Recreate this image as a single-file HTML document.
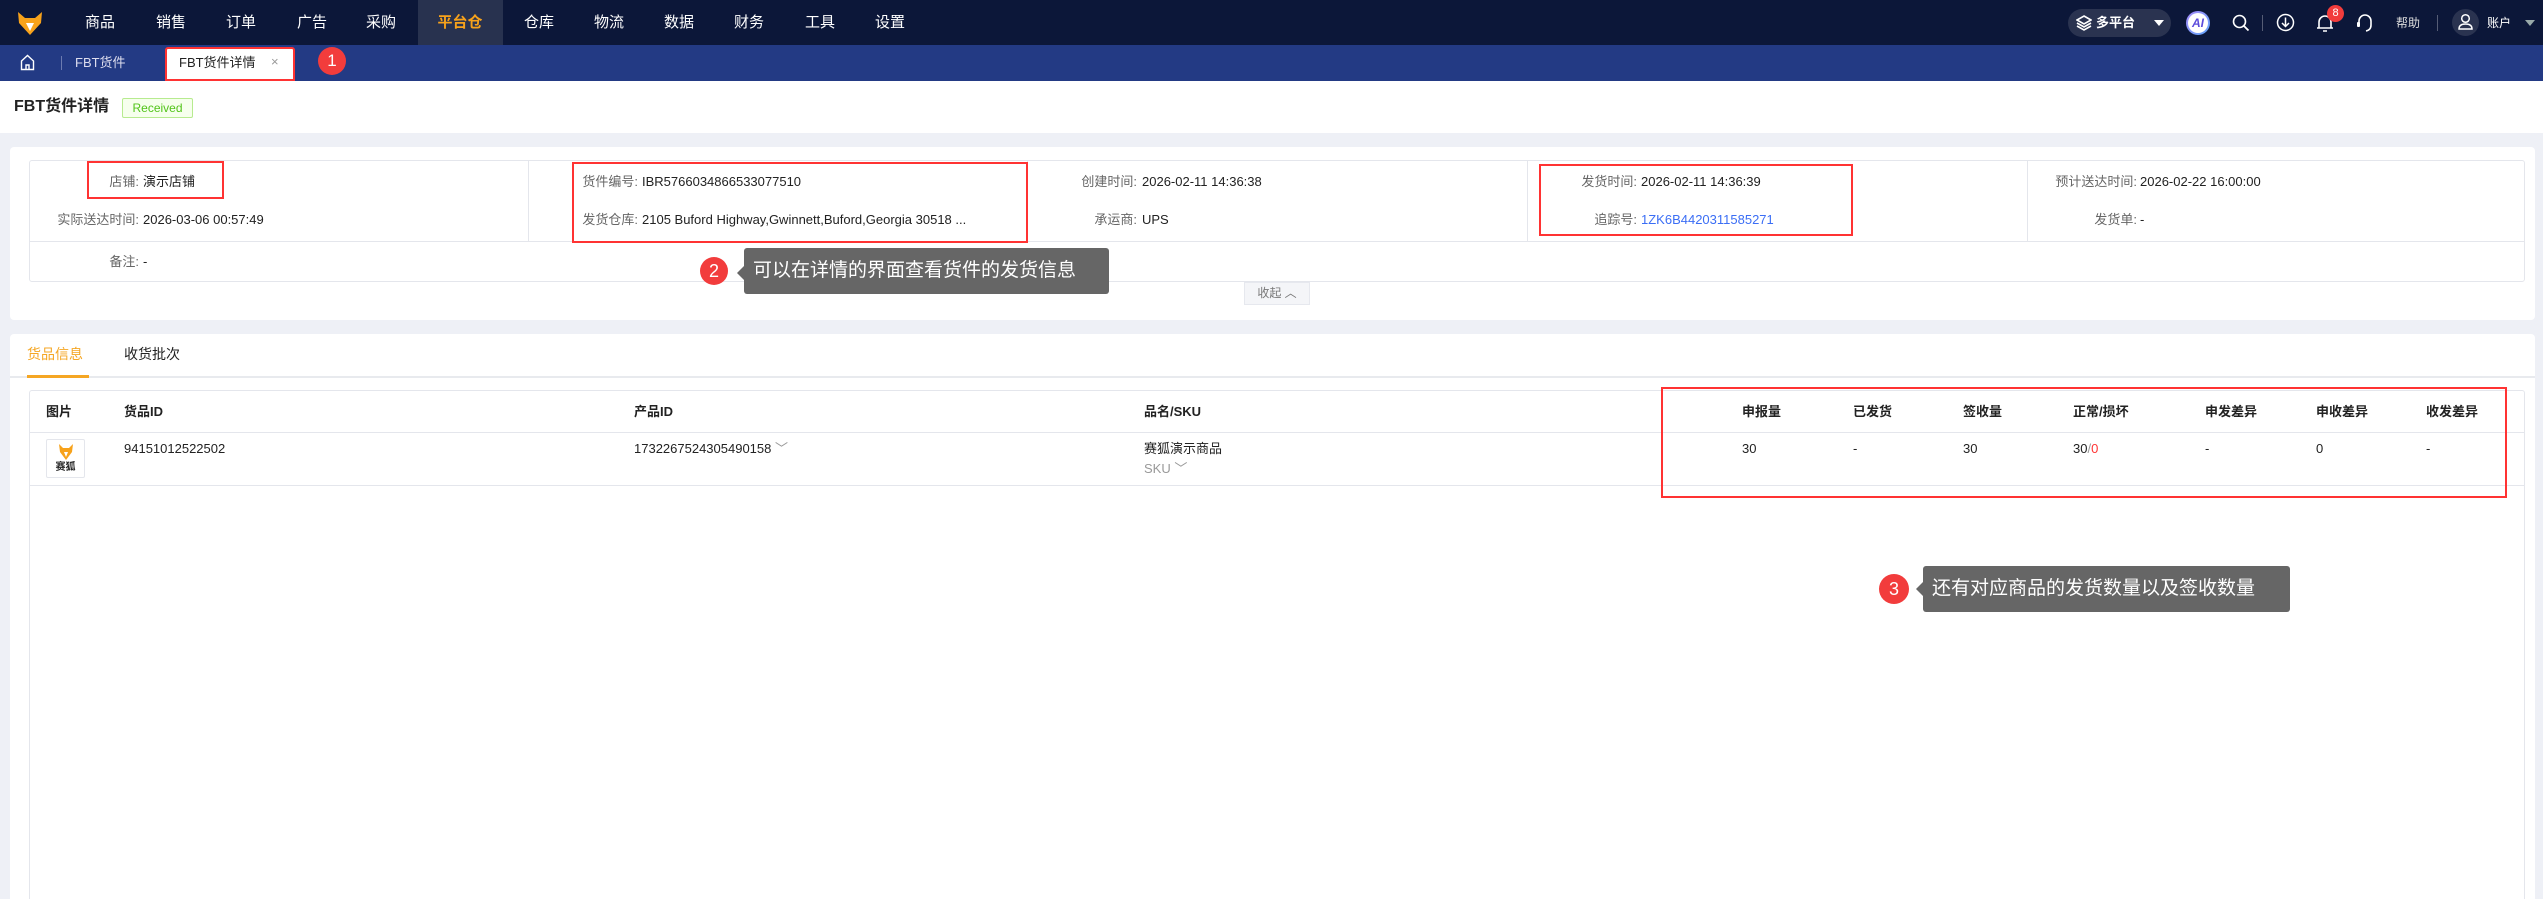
<!DOCTYPE html>
<html style="width:2543px;height:899px;overflow:hidden"><head><meta charset="utf-8"><style>
*{margin:0;padding:0;box-sizing:border-box}
body{width:2543px;height:899px;overflow:hidden;background:#eef0f6;font-family:"Liberation Sans","Noto Sans CJK SC",sans-serif;font-size:13px;line-height:16px;color:#222;position:relative}
.a{position:absolute;white-space:nowrap}
.nav{position:absolute;left:0;top:0;width:2543px;height:45px;background:#0c1739}
.nav .it{position:absolute;top:0;height:45px;line-height:45px;color:#fff;font-size:15px;transform:translateX(-50%)}
.tabs{position:absolute;left:0;top:45px;width:2543px;height:36px;background:#233a84}
.hdr{position:absolute;left:0;top:81px;width:2543px;height:52px;background:#fff}
.card{position:absolute;background:#fff;border-radius:4px}
.red{position:absolute;border:2px solid #f33}
.lbl{position:absolute;color:#666;text-align:right;width:106px;line-height:16px}
.val{position:absolute;color:#222;line-height:16px;white-space:nowrap}
.badge{position:absolute;border-radius:50%;background:#f23c3c;color:#fff;text-align:center}
.tip{position:absolute;background:#666;color:#fff;border-radius:3px}
.th{position:absolute;top:404px;font-weight:bold;font-size:13px}
.td{position:absolute;top:441px;white-space:nowrap}
</style></head><body>
<div class="nav">
 <svg class="a" style="left:17px;top:11px" width="26" height="25" viewBox="0 0 26 25"><path d="M1 1 L8 7 L18 7 L25 1 L24 12 L13 24 L2 12 Z" fill="#f7a21b"/><path d="M9 12 L13 20 L17 12 Z" fill="#fff"/></svg>
 <div class="it" style="left:100px">商品</div><div class="it" style="left:171px">销售</div><div class="it" style="left:241px">订单</div><div class="it" style="left:312px">广告</div><div class="it" style="left:381px">采购</div>
 <div class="a" style="left:418px;top:0;width:85px;height:45px;background:#28324f"></div>
 <div class="it" style="left:460px;color:#f7a21b;font-weight:bold">平台仓</div>
 <div class="it" style="left:539px">仓库</div><div class="it" style="left:609px">物流</div><div class="it" style="left:679px">数据</div><div class="it" style="left:749px">财务</div><div class="it" style="left:820px">工具</div><div class="it" style="left:890px">设置</div>
 <div class="a" style="left:2068px;top:9px;width:103px;height:28px;border-radius:14px;background:#2a3350"></div>
 <svg class="a" style="left:2076px;top:15px" width="16" height="16" viewBox="0 0 16 16"><path d="M8 1 L15 5 L8 9 L1 5 Z M1 8 L8 12 L15 8 M1 11 L8 15 L15 11" fill="none" stroke="#fff" stroke-width="1.6"/></svg>
 <div class="a" style="left:2096px;top:15px;color:#fff;font-size:13px;font-weight:bold">多平台</div>
 <div class="a" style="left:2154px;top:20px;border:5px solid transparent;border-top:6px solid #fff"></div>
 <div class="a" style="left:2186px;top:11px;width:24px;height:24px;border-radius:50%;background:linear-gradient(135deg,#a78bfa,#60a5fa);"></div>
 <div class="a" style="left:2188px;top:13px;width:20px;height:20px;border-radius:50%;background:#fff;color:#5b4bdb;font-weight:bold;font-style:italic;font-size:12px;text-align:center;line-height:20px">AI</div>
 <svg class="a" style="left:2232px;top:14px" width="18" height="18" viewBox="0 0 18 18"><circle cx="7.5" cy="7.5" r="6" fill="none" stroke="#fff" stroke-width="1.6"/><path d="M12 12 L16.5 16.5" stroke="#fff" stroke-width="1.8"/></svg>
 <div class="a" style="left:2262px;top:15px;width:1px;height:16px;background:#555c75"></div>
 <svg class="a" style="left:2276px;top:13px" width="19" height="19" viewBox="0 0 19 19"><circle cx="9.5" cy="9.5" r="8" fill="none" stroke="#fff" stroke-width="1.5"/><path d="M9.5 4.5 V13 M6 10 L9.5 13.5 L13 10" fill="none" stroke="#fff" stroke-width="1.5"/></svg>
 <svg class="a" style="left:2316px;top:13px" width="18" height="20" viewBox="0 0 18 20"><path d="M3 15 V9 a6 6 0 0 1 12 0 V15 Z M1 15 H17 M7 18 H11" fill="none" stroke="#fff" stroke-width="1.6"/></svg>
 <div class="badge" style="left:2327px;top:5px;width:17px;height:17px;font-size:11px;line-height:17px">8</div>
 <svg class="a" style="left:2356px;top:13px" width="18" height="20" viewBox="0 0 18 20"><path d="M3 12 V8 a6 6 0 0 1 12 0 V12 M15 12 Q15 17 10 18" fill="none" stroke="#fff" stroke-width="1.6"/><rect x="1" y="9" width="3" height="5" rx="1" fill="#fff"/></svg>
 <div class="a" style="left:2396px;top:15px;color:#ddd;font-size:12px">帮助</div>
 <div class="a" style="left:2437px;top:15px;width:1px;height:16px;background:#555c75"></div>
 <div class="a" style="left:2452px;top:9px;width:27px;height:27px;border-radius:50%;background:#2a3350"></div>
 <svg class="a" style="left:2457px;top:13px" width="17" height="18" viewBox="0 0 17 18"><circle cx="8.5" cy="5.5" r="3.8" fill="none" stroke="#fff" stroke-width="1.5"/><path d="M2 16 Q2 11 8.5 11 Q15 11 15 16 Z" fill="none" stroke="#fff" stroke-width="1.5"/></svg>
 <div class="a" style="left:2487px;top:15px;color:#fff;font-size:12px">账户</div>
 <div class="a" style="left:2525px;top:20px;border:5px solid transparent;border-top:6px solid #9aa"></div>
</div>
<div class="tabs">
 <svg class="a" style="left:20px;top:9px" width="15" height="17" viewBox="0 0 15 17"><path d="M1.5 7 L7.5 1.5 L13.5 7 V15.5 H1.5 Z M6 15.5 V11 H9 V15.5" fill="none" stroke="#fff" stroke-width="1.4"/></svg>
 <div class="a" style="left:61px;top:11px;width:1px;height:14px;background:#6c7bb0"></div>
 <div class="a" style="left:75px;top:10px;color:#dde;font-size:13px">FBT货件</div>
 <div class="a" style="left:165px;top:2px;width:130px;height:34px;background:#fff;border:2px solid #f33;border-radius:3px 3px 0 0"></div>
 <div class="a" style="left:179px;top:10px;color:#222;font-size:13px">FBT货件详情</div>
 <div class="a" style="left:271px;top:9px;color:#999;font-size:13px">×</div>
 <div class="badge" style="left:318px;top:2px;width:28px;height:28px;font-size:17px;line-height:28px">1</div>
</div>
<div class="hdr">
 <div class="a" style="left:14px;top:18px;font-size:16px;font-weight:bold">FBT货件详情</div>
 <div class="a" style="left:122px;top:17px;width:71px;height:20px;border:1px solid #b7eb8f;background:#f6ffed;color:#52c41a;font-size:12px;text-align:center;line-height:18px;border-radius:2px">Received</div>
</div>
<div class="card" style="left:10px;top:147px;width:2525px;height:173px"></div>
<div class="a" style="left:29px;top:160px;width:2496px;height:122px;border:1px solid #e4e6ec;border-radius:3px"></div>
<div class="a" style="left:29px;top:241px;width:2496px;height:1px;background:#e4e6ec"></div>
<div class="a" style="left:528px;top:160px;width:1px;height:81px;background:#e4e6ec"></div>
<div class="a" style="left:1027px;top:160px;width:1px;height:81px;background:#e4e6ec"></div>
<div class="a" style="left:1527px;top:160px;width:1px;height:81px;background:#e4e6ec"></div>
<div class="a" style="left:2027px;top:160px;width:1px;height:81px;background:#e4e6ec"></div>
<div class="lbl" style="left:33px;top:174px">店铺:</div><div class="val" style="left:143px;top:174px">演示店铺</div>
<div class="lbl" style="left:33px;top:212px">实际送达时间:</div><div class="val" style="left:143px;top:212px">2026-03-06 00:57:49</div>
<div class="lbl" style="left:33px;top:254px">备注:</div><div class="val" style="left:143px;top:254px">-</div>
<div class="lbl" style="left:532px;top:174px">货件编号:</div><div class="val" style="left:642px;top:174px">IBR5766034866533077510</div>
<div class="lbl" style="left:532px;top:212px">发货仓库:</div><div class="val" style="left:642px;top:212px">2105 Buford Highway,Gwinnett,Buford,Georgia 30518 ...</div>
<div class="lbl" style="left:1031px;top:174px">创建时间:</div><div class="val" style="left:1142px;top:174px">2026-02-11 14:36:38</div>
<div class="lbl" style="left:1031px;top:212px">承运商:</div><div class="val" style="left:1142px;top:212px">UPS</div>
<div class="lbl" style="left:1531px;top:174px">发货时间:</div><div class="val" style="left:1641px;top:174px">2026-02-11 14:36:39</div>
<div class="lbl" style="left:1531px;top:212px">追踪号:</div><div class="val" style="left:1641px;top:212px;color:#3b6ef5">1ZK6B4420311585271</div>
<div class="lbl" style="left:2031px;top:174px">预计送达时间:</div><div class="val" style="left:2140px;top:174px">2026-02-22 16:00:00</div>
<div class="lbl" style="left:2031px;top:212px">发货单:</div><div class="val" style="left:2140px;top:212px">-</div>
<div class="red" style="left:87px;top:161px;width:137px;height:38px"></div>
<div class="red" style="left:572px;top:162px;width:456px;height:81px"></div>
<div class="red" style="left:1539px;top:164px;width:314px;height:72px"></div>
<div class="a" style="left:1244px;top:282px;width:66px;height:23px;background:#f4f5f8;border:1px solid #e6e8ee;color:#777;font-size:12px;text-align:center;line-height:21px">收起 ︿</div>
<div class="badge" style="left:700px;top:257px;width:28px;height:28px;font-size:18px;line-height:28px">2</div>
<div class="a" style="left:737px;top:266px;border:7px solid transparent;border-right:7px solid #666;border-left:0"></div>
<div class="tip" style="left:744px;top:248px;width:365px;height:46px;font-size:19px;line-height:46px;padding-left:9px">可以在详情的界面查看货件的发货信息</div>
<div class="card" style="left:10px;top:334px;width:2525px;height:565px;border-radius:4px 4px 0 0"></div>
<div class="a" style="left:27px;top:346px;color:#f5a623;font-size:14px">货品信息</div>
<div class="a" style="left:124px;top:346px;color:#222;font-size:14px">收货批次</div>
<div class="a" style="left:10px;top:376px;width:2525px;height:2px;background:#e8eaee"></div>
<div class="a" style="left:27px;top:375px;width:62px;height:3px;background:#f5a623"></div>
<div class="a" style="left:29px;top:390px;width:2496px;height:509px;border:1px solid #e4e6ec;border-bottom:0;border-radius:3px 3px 0 0"></div>
<div class="a" style="left:29px;top:432px;width:2496px;height:1px;background:#e4e6ec"></div>
<div class="a" style="left:29px;top:485px;width:2496px;height:1px;background:#e4e6ec"></div>
<div class="th" style="left:46px">图片</div><div class="th" style="left:124px">货品ID</div><div class="th" style="left:634px">产品ID</div><div class="th" style="left:1144px">品名/SKU</div>
<div class="th" style="left:1742px">申报量</div><div class="th" style="left:1853px">已发货</div><div class="th" style="left:1963px">签收量</div><div class="th" style="left:2073px">正常/损坏</div><div class="th" style="left:2205px">申发差异</div><div class="th" style="left:2316px">申收差异</div><div class="th" style="left:2426px">收发差异</div>
<div class="a" style="left:46px;top:439px;width:39px;height:39px;border:1px solid #e4e6ec;border-radius:2px;text-align:center">
 <svg style="position:absolute;left:11px;top:3px" width="16" height="18" viewBox="0 0 16 18"><path d="M1 1 L5 5 L11 5 L15 1 L14 9 L8 17 L2 9 Z" fill="#f7a21b"/><path d="M6 9 L8 14 L10 9Z" fill="#fff"/></svg>
 <div style="position:absolute;left:0;top:22px;width:37px;font-size:10px;font-weight:bold;line-height:12px">赛狐</div>
</div>
<div class="td" style="left:124px">94151012522502</div>
<div class="td" style="left:634px">1732267524305490158 <span style="color:#999">﹀</span></div>
<div class="td" style="left:1144px">赛狐演示商品</div>
<div class="a" style="left:1144px;top:461px;color:#999">SKU ﹀</div>
<div class="td" style="left:1742px">30</div><div class="td" style="left:1853px">-</div><div class="td" style="left:1963px">30</div>
<div class="td" style="left:2073px">30<span style="color:#999">/</span><span style="color:#f33">0</span></div>
<div class="td" style="left:2205px">-</div><div class="td" style="left:2316px">0</div><div class="td" style="left:2426px">-</div>
<div class="red" style="left:1661px;top:387px;width:846px;height:111px"></div>
<div class="badge" style="left:1879px;top:574px;width:30px;height:30px;font-size:18px;line-height:30px">3</div>
<div class="a" style="left:1916px;top:582px;border:7px solid transparent;border-right:7px solid #666;border-left:0"></div>
<div class="tip" style="left:1923px;top:566px;width:367px;height:46px;font-size:19px;line-height:46px;padding-left:9px">还有对应商品的发货数量以及签收数量</div>
</body></html>
